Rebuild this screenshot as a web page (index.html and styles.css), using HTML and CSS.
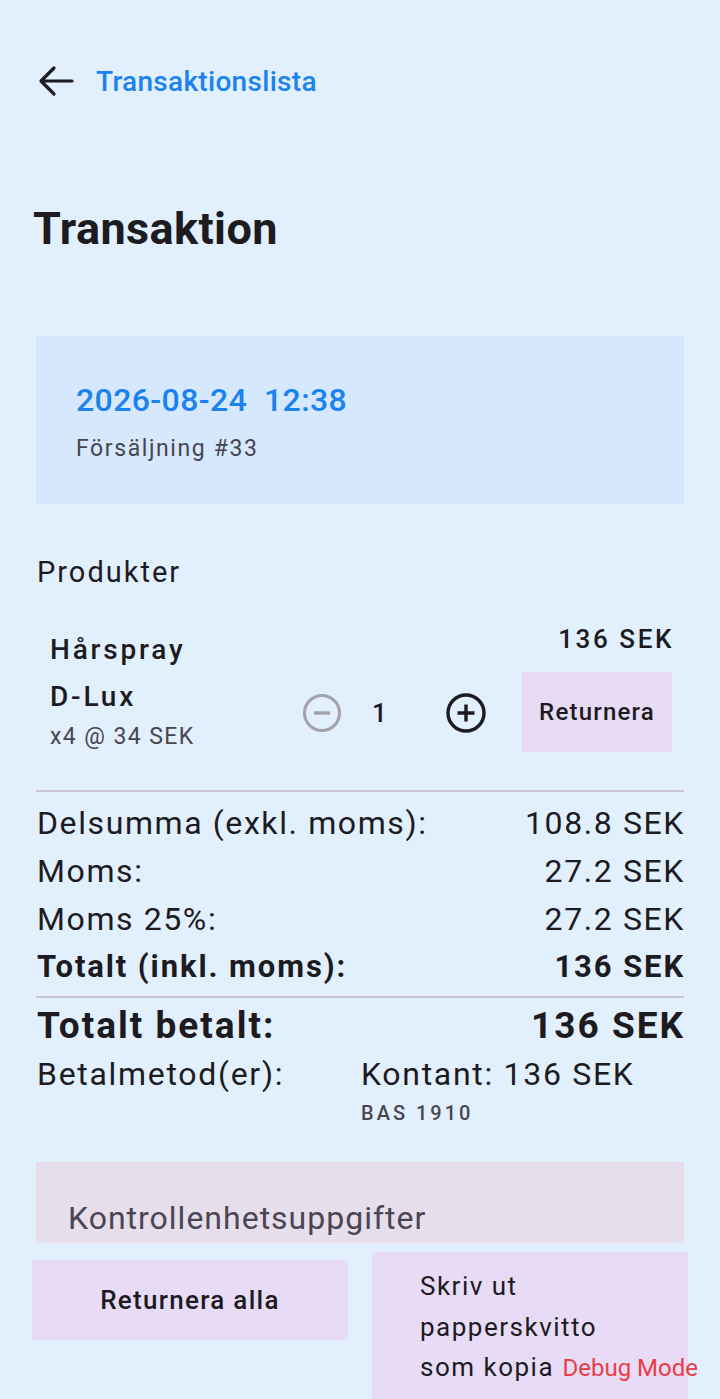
FILE: index.html
```html
<!DOCTYPE html>
<html lang="sv">
<head>
    <meta charset="UTF-8">
    <meta name="viewport" content="width=device-width, initial-scale=1.0">
    <title>Transaktion</title>
    <link rel="stylesheet" href="styles.css">
</head>
<body>

    <!-- Top bar with back link -->
    <header class="topbar">
        <svg class="back-icon" viewBox="0 0 48 48" width="48" height="48">
            <path d="M40 24H10M22 11L9 24l13 13" fill="none" stroke="#1c1b1f" stroke-width="3.2" stroke-linecap="round" stroke-linejoin="round"/>
        </svg>
        <a class="back-link" href="#">Transaktionslista</a>
    </header>

    <h1 class="title">Transaktion</h1>

    <div class="info-card">
        <div class="date">2026-08-24&nbsp;&nbsp;12:38</div>
        <div class="sale-no">Försäljning #33</div>
    </div>

    <h2 class="section-title">Produkter</h2>

    <div class="product">
        <div class="product-info">
            <div class="product-name">Hårspray</div>
            <div class="product-name">D-Lux</div>
            <div class="product-meta">x4 @ 34 SEK</div>
        </div>
        <div class="qty">
            <svg class="qty-btn" viewBox="0 0 40 40" width="40" height="40">
                <circle cx="20" cy="20" r="17.5" fill="none" stroke="#a3a2a8" stroke-width="3"/>
                <path d="M12 20h16" stroke="#a3a2a8" stroke-width="3.4"/>
            </svg>
            <span class="qty-value">1</span>
            <svg class="qty-btn" viewBox="0 0 40 40" width="40" height="40">
                <circle cx="20" cy="20" r="18" fill="none" stroke="#1c1b1f" stroke-width="3.4"/>
                <path d="M11.5 20h17M20 11.5v17" stroke="#1c1b1f" stroke-width="3.4"/>
            </svg>
        </div>
        <div class="product-side">
            <div class="product-price">136 SEK</div>
            <button class="return-btn">Returnera</button>
        </div>
    </div>

    <div class="totals">
        <div class="row"><span>Delsumma (exkl. moms):</span><span>108.8 SEK</span></div>
        <div class="row"><span>Moms:</span><span>27.2 SEK</span></div>
        <div class="row"><span>Moms 25%:</span><span>27.2 SEK</span></div>
        <div class="row bold"><span>Totalt (inkl. moms):</span><span>136 SEK</span></div>
    </div>

    <div class="paid">
        <div class="row big"><span>Totalt betalt:</span><span>136 SEK</span></div>
        <div class="pay-row">
            <span class="pay-label">Betalmetod(er):</span>
            <div class="pay-methods">
                <div>Kontant: 136 SEK</div>
                <div class="account">BAS 1910</div>
            </div>
        </div>
    </div>

    <div class="control-card">Kontrollenhetsuppgifter</div>

    <div class="actions">
        <button class="action-btn strong">Returnera alla</button>
        <button class="action-btn print">Skriv ut<br>papperskvitto<br>som kopia</button>
    </div>

    <span class="debug">Debug Mode</span>

</body>
</html>
```

FILE: styles.css
```css
html, body {
    margin: 0;
}

body {
    width: 720px;
    height: 1399px;
    overflow: hidden;
    position: relative;
    background: #e2effd;
    font-family: Roboto, "Noto Sans", sans-serif;
    color: #1c1b1f;
}

.topbar {
    display: flex;
    align-items: center;
    padding: 57px 0 0 32px;
    height: 48px;
}

.back-icon {
    display: block;
}

.back-link {
    margin-left: 16px;
    color: #1a83ee;
    text-decoration: none;
    font-size: 28px;
    font-weight: 500;
    letter-spacing: 0.3px;
}

.title {
    margin: 100px 0 0 33px;
    font-size: 45px;
    font-weight: 700;
    letter-spacing: 0.4px;
    line-height: 48px;
}

/* Date card */
.info-card {
    margin: 83px 36px 0;
    height: 168px;
    box-sizing: border-box;
    padding: 44px 40px 0;
    background: #d6e8fd;
}

.date {
    color: #1a83ee;
    font-size: 32px;
    font-weight: 500;
    letter-spacing: 0.4px;
    line-height: 40px;
}

.sale-no {
    margin-top: 14px;
    color: #47464f;
    font-size: 23px;
    letter-spacing: 1.6px;
    line-height: 30px;
}

.section-title {
    margin: 48px 0 0 37px;
    font-size: 29px;
    font-weight: 400;
    letter-spacing: 2px;
    line-height: 40px;
}

/* Product row */
.product {
    display: flex;
    align-items: center;
    margin: 31px 48px 0 50px;
}

.product-info {
    flex: 1;
}

.product-name {
    font-size: 28px;
    font-weight: 500;
    letter-spacing: 2.8px;
    line-height: 47px;
}

.product-meta {
    color: #47464f;
    font-size: 23px;
    letter-spacing: 1.4px;
    line-height: 34px;
}

.qty {
    display: flex;
    align-items: center;
    margin-top: 46px;
    margin-right: 36px;
}

.qty-btn {
    display: block;
}

.qty-value {
    width: 104px;
    padding-left: 30px;
    box-sizing: border-box;
    font-size: 26px;
    font-weight: 500;
}

.product-side {
    display: flex;
    flex-direction: column;
    align-items: flex-end;
}

.product-price {
    font-size: 26px;
    font-weight: 500;
    letter-spacing: 2.6px;
    margin-right: -2px;
    line-height: 32px;
    margin-bottom: 17px;
}

.return-btn {
    width: 150px;
    height: 80px;
    border: none;
    background: #e7dbf5;
    color: #1c1b1f;
    font-family: inherit;
    font-size: 24px;
    font-weight: 500;
    letter-spacing: 1.2px;
    margin-bottom: 4px;
}

/* Totals */
.totals {
    margin: 34px 36px 0;
    padding-top: 7px;
    border-top: 2px solid #c8c4d2;
}

.row {
    display: flex;
    justify-content: space-between;
    font-size: 32px;
    line-height: 48px;
    letter-spacing: 1.6px;
    padding-left: 1px;
    margin-right: -1px;
}

.row.bold {
    font-weight: 700;
    font-size: 31px;
    letter-spacing: 1.9px;
}

.paid {
    margin: 5px 36px 0;
    padding-top: 3px;
    border-top: 2px solid #c8c4d2;
}

.row.big {
    font-size: 37px;
    font-weight: 700;
    letter-spacing: 2px;
    line-height: 50px;
}

.pay-row {
    display: flex;
    font-size: 32px;
    letter-spacing: 1.7px;
    line-height: 46px;
    padding-left: 1px;
}

.pay-label {
    width: 324px;
}

.account {
    color: #47464f;
    font-size: 20px;
    font-weight: 500;
    letter-spacing: 3px;
    line-height: 32px;
}

/* Control unit card */
.control-card {
    margin: 33px 36px 0;
    height: 81px;
    box-sizing: border-box;
    padding: 38px 0 0 32px;
    background: #e6deeb;
    color: #4a4553;
    font-size: 32px;
    letter-spacing: 1px;
    line-height: 36px;
    overflow: hidden;
}

/* Bottom buttons */
.actions {
    display: flex;
    align-items: flex-start;
    gap: 24px;
    margin: 9px 32px 0;
}

.action-btn {
    width: 316px;
    border: none;
    background: #e7dbf5;
    color: #1c1b1f;
    font-family: inherit;
    font-size: 26px;
}

.action-btn.strong {
    height: 80px;
    margin-top: 8px;
    font-weight: 500;
    letter-spacing: 1.3px;
}

.action-btn.print {
    height: 170px;
    text-align: left;
    padding: 14px 0 0 48px;
    line-height: 40.5px;
    letter-spacing: 1.5px;
    display: flex;
    align-items: flex-start;
}

.debug {
    position: absolute;
    right: 22px;
    bottom: 17px;
    color: #ea3d48;
    font-size: 24px;
}
```
